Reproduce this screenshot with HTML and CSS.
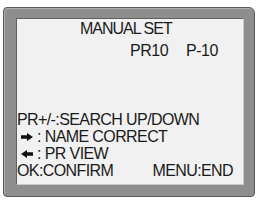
FILE: index.html
```html
<!DOCTYPE html>
<html lang="en">
<head>
  <meta charset="UTF-8" />
  <title>Manual set</title>
  <link rel="stylesheet" href="styles.css">
</head>
<body>

  <!-- Cadre de l'ecran OSD -->
  <div class="frame">
    <div class="screen">
      <div class="title">MANUAL SET</div>
      <div class="channel">
        <span>PR10</span>
        <span>P-10</span>
      </div>

      <div class="help">
        <div class="line">PR+/-:SEARCH UP/DOWN</div>
        <div class="line">
          <svg class="arrow" width="12" height="8" viewBox="0 0 12 8">
            <path d="M0 2.2 H6 V0 L12 4 L6 8 V5.8 H0 Z" fill="#111" />
          </svg>
          <span>: NAME CORRECT</span>
        </div>
        <div class="line">
          <svg class="arrow" width="12" height="8" viewBox="0 0 12 8">
            <path d="M12 2.2 H6 V0 L0 4 L6 8 V5.8 H12 Z" fill="#111" />
          </svg>
          <span>: PR VIEW</span>
        </div>
        <div class="line last">
          <span>OK:CONFIRM</span>
          <span>MENU:END</span>
        </div>
      </div>
    </div>
  </div>

</body>
</html>
```

FILE: styles.css
```css
body {
  margin: 0;
  padding: 0;
  background: #fff;
  font-family: "Liberation Sans", Arial, sans-serif;
  color: #1a1a1a;
}
.frame {
  width: 252px;
  height: 190px;
  box-sizing: border-box;
  margin: 7px 0 0 3px;
  padding: 10px 10px 11px 12px;
  background: #8e8e8e;
  border: 1px solid #5a5a5a;
  border-radius: 4px 6px 4px 4px;
  box-shadow: inset 1px 1px 0 #b0b0b0;
}
.screen {
  height: 100%;
  box-sizing: border-box;
  background: #f1f1f1;
  border: 1px solid #606060;
  border-right-color: #c8c8c8;
  border-bottom-color: #c8c8c8;
  font-size: 16px;
  line-height: 17.3px;
  letter-spacing: -0.6px;
}
.title {
  margin: 1px 0 0 63px;
  letter-spacing: -1px;
}
.channel {
  display: flex;
  gap: 18px;
  margin: 5px 0 0 113px;
  letter-spacing: -0.5px;
}
.help {
  margin-top: 51px;
}
.line {
  display: flex;
  align-items: center;
}
.arrow {
  margin: 0 4px 0 4px;
}
.line.last {
  justify-content: space-between;
  padding-right: 10px;
}
```
